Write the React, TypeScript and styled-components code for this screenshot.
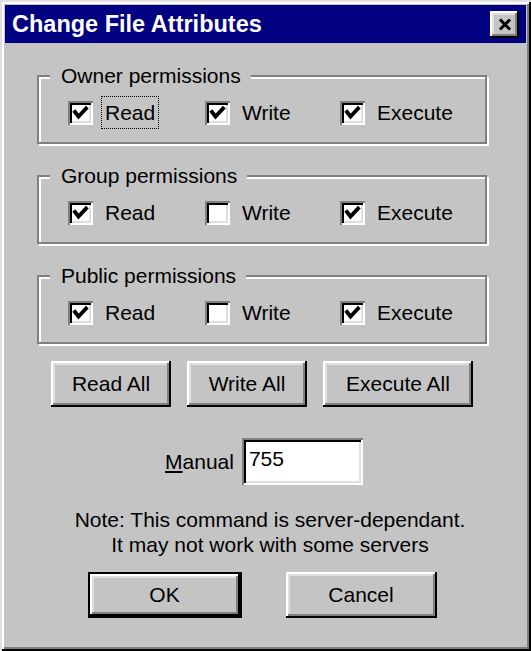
import React from "react";
import styled, { createGlobalStyle } from "styled-components";

const FACE = "#c4c4c4";

const GlobalStyle = createGlobalStyle`
  html, body {
    margin: 0;
    padding: 0;
    background: ${FACE};
  }
  body {
    font-family: "Liberation Sans", Arial, sans-serif;
  }
`;

type Perm = { label: string; checked: boolean; focus?: boolean };

const groups: { title: string; perms: Perm[] }[] = [
  {
    title: "Owner permissions",
    perms: [
      { label: "Read", checked: true, focus: true },
      { label: "Write", checked: true },
      { label: "Execute", checked: true },
    ],
  },
  {
    title: "Group permissions",
    perms: [
      { label: "Read", checked: true },
      { label: "Write", checked: false },
      { label: "Execute", checked: true },
    ],
  },
  {
    title: "Public permissions",
    perms: [
      { label: "Read", checked: true },
      { label: "Write", checked: false },
      { label: "Execute", checked: true },
    ],
  },
];

const CheckBox = ({ checked }: { checked: boolean }) => (
  <Box>
    {checked && (
      <svg width="25" height="24" viewBox="0 0 25 24">
        <polyline
          points="7,11 10.5,15.5 18,7.5"
          fill="none"
          stroke="#000"
          strokeWidth="3.8"
          strokeLinecap="square"
        />
      </svg>
    )}
  </Box>
);

const App = () => {
  return (
    <>
      <GlobalStyle />
      <Window>
        <TitleBar>
          <span>Change File Attributes</span>
          <CloseButton aria-label="Close">
            <svg width="14" height="13" viewBox="0 0 14 13">
              <path d="M2 1.5 L12 11.5 M12 1.5 L2 11.5" stroke="#000" strokeWidth="3" />
            </svg>
          </CloseButton>
        </TitleBar>
        <Body>
          <Groups>
            {groups.map((g) => (
              <Group key={g.title}>
                <Legend>{g.title}</Legend>
                <Row>
                  {g.perms.map((p) => (
                    <Check key={p.label}>
                      <CheckBox checked={p.checked} />
                      <CheckText $focus={p.focus}>{p.label}</CheckText>
                    </Check>
                  ))}
                </Row>
              </Group>
            ))}
          </Groups>
          <ButtonRow>
            <Button $w={120}>Read All</Button>
            <Button $w={120}>Write All</Button>
            <Button $w={150}>Execute All</Button>
          </ButtonRow>
          <ManualRow>
            <span>
              <u>M</u>anual
            </span>
            <Field defaultValue="755" readOnly />
          </ManualRow>
          <Note>
            Note: This command is server-dependant.
            <br />
            It may not work with some servers
          </Note>
          <FooterRow>
            <Button $w={154} $default>
              OK
            </Button>
            <Button $w={151}>Cancel</Button>
          </FooterRow>
        </Body>
      </Window>
    </>
  );
};

const Window = styled.div`
  width: 531px;
  height: 651px;
  box-sizing: border-box;
  padding: 5px;
  background: ${FACE};
  display: flex;
  flex-direction: column;
  box-shadow: inset 2px 2px 0 #dfdfdf, inset -2px -2px 0 #000, inset 4px 4px 0 #fff,
    inset -4px -4px 0 #808080;
`;

const TitleBar = styled.div`
  height: 38px;
  flex-shrink: 0;
  background: #000080;
  color: #fff;
  font-weight: bold;
  font-size: 23.5px;
  display: flex;
  align-items: center;
  justify-content: space-between;
  padding: 0 7px;
`;

const CloseButton = styled.button`
  width: 29px;
  height: 27px;
  padding: 0;
  border: none;
  background: ${FACE};
  display: flex;
  align-items: center;
  justify-content: center;
  box-shadow: inset -2px -2px 0 #000, inset 2px 2px 0 #fff, inset -4px -4px 0 #808080,
    inset 4px 4px 0 #dfdfdf;
`;

const Body = styled.div`
  flex: 1;
  display: flex;
  flex-direction: column;
  padding: 21px 39px 0 32px;
  font-size: 21px;
  color: #000;
`;

const Groups = styled.div`
  display: flex;
  flex-direction: column;
  gap: 20px;
`;

const Group = styled.fieldset`
  margin: 0;
  min-width: 0;
  height: 80px;
  box-sizing: border-box;
  padding: 12px 0 0 0;
  border: 2px solid #808080;
  box-shadow: 2px 2px 0 #fff, inset 2px 2px 0 #fff;
`;

const Legend = styled.legend`
  margin-left: 11px;
  padding: 0 10px 0 11px;
  line-height: 24px;
  background: ${FACE};
`;

const Row = styled.div`
  display: grid;
  grid-template-columns: 137px 135px auto;
  grid-template-rows: 25px;
  align-items: center;
  padding-left: 29px;
`;

const Check = styled.label`
  display: flex;
  align-items: center;
`;

const Box = styled.span`
  width: 25px;
  height: 24px;
  flex-shrink: 0;
  background: #fff;
  box-shadow: inset 2px 2px 0 #808080, inset -2px -2px 0 #fff, inset 4px 4px 0 #000,
    inset -4px -4px 0 #dfdfdf;
  svg {
    display: block;
  }
`;

const CheckText = styled.span<{ $focus?: boolean }>`
  margin-left: 8px;
  padding: 0 3px;
  line-height: 31px;
  border: 1px dotted ${(p) => (p.$focus ? "#000" : "transparent")};
`;

const ButtonRow = styled.div`
  display: flex;
  justify-content: center;
  gap: 16px;
  margin-top: 17px;
`;

const Button = styled.button<{ $w: number; $default?: boolean }>`
  width: ${(p) => p.$w}px;
  height: 46px;
  box-sizing: border-box;
  padding: 0;
  font: inherit;
  color: #000;
  background: ${FACE};
  border: ${(p) => (p.$default ? "2px solid #000" : "none")};
  box-shadow: inset -2px -2px 0 #000, inset 2px 2px 0 #fff, inset -4px -4px 0 #808080,
    inset 4px 4px 0 #dfdfdf;
`;

const ManualRow = styled.div`
  display: flex;
  justify-content: center;
  align-items: center;
  gap: 8px;
  margin-top: 31px;
  padding-left: 4px;
`;

const Field = styled.input`
  width: 121px;
  height: 47px;
  box-sizing: border-box;
  padding: 0 0 6px 7px;
  font: inherit;
  color: #000;
  background: #fff;
  border: none;
  outline: none;
  box-shadow: inset 2px 2px 0 #808080, inset -2px -2px 0 #fff, inset 4px 4px 0 #000,
    inset -4px -4px 0 #dfdfdf;
`;

const Note = styled.p`
  margin: 22px 0 0;
  padding-left: 16px;
  text-align: center;
  line-height: 25px;
`;

const FooterRow = styled.div`
  display: flex;
  justify-content: center;
  gap: 44px;
  margin-top: 15px;
`;

export default App;
